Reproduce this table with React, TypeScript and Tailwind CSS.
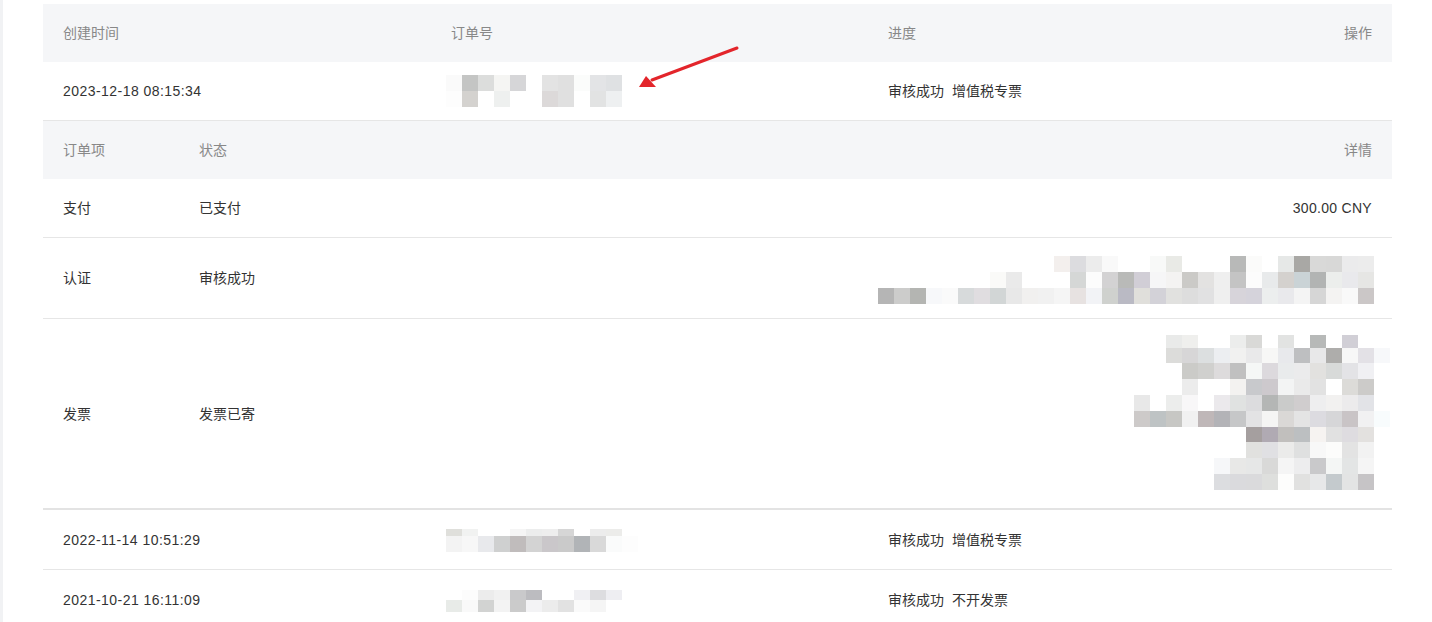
import React from 'react';

type MosaicRow = { h: number; c: string };

// pixelated (redacted) blocks, '-' = empty cell
function Mosaic({ rows, w = 16, className }: { rows: MosaicRow[]; w?: number; className?: string }) {
  const cols = Math.max(...rows.map((r) => r.c.split(' ').length));
  const height = rows.reduce((s, r) => s + r.h, 0);
  let y = 0;
  return (
    <svg width={cols * w} height={height} className={className} shapeRendering="crispEdges">
      {rows.map((r, ri) => {
        const top = y;
        y += r.h;
        return r.c.split(' ').map((col, ci) =>
          col === '-' ? null : (
            <rect key={ri + '-' + ci} x={ci * w} y={top} width={w} height={r.h} fill={'#' + col} />
          )
        );
      })}
    </svg>
  );
}

const orderMosaic1: MosaicRow[] = [
  { h: 16, c: 'fafafa c4c5c4 dcdddc f5f5f3 d6d6d8 - e3e3e3 e0e0e0 fbfcfb e3e4e6 dfe1e3' },
  { h: 16, c: 'fdfdfd d4d2cf - eef0ef - - dcd9d9 e0e0e0 - e2e3e3 eef0f1' },
];

const orderMosaic2: MosaicRow[] = [
  { h: 7, c: 'dfdfdb f1f2f1 - - f5f5f5 eceded eeeeee d6d6d6 - ececec ececea -' },
  { h: 16, c: 'f3f3f3 f7f7f7 e8e9ec cfd0d0 c0bcbc d3d3d3 cac7ca cacaca b1b4b7 d9d9d9 fafbfb fdfdfd' },
];

const orderMosaic3: MosaicRow[] = [
  { h: 10, c: '- fcfcfc ececec f1f1f1 c9c9cb bcbcc0 - - f0f0f3 dddde0 eeeef2' },
  { h: 12, c: 'e8ebe8 f9f9f9 d2d3d2 f3f3f3 cbcbcb f3f3f5 ececec e2e2e2 fafafa f5f5f5 -' },
];

const authMosaic: MosaicRow[] = [
  { h: 16, c: '- - - - - - - - - - - f3efed dcdcdf ececec f9f9f9 - - f8f9f8 e9eae6 - - - b8b9b8 fbfbfa - e6e8e7 a9a8a5 d9d9d8 d8d8d7 ebebec ececec' },
  { h: 16, c: '- - - - - - - fafaf8 eaeaea - - - d5d7d6 fcfcfc d3d2d3 b9bab8 d1ced6 f6f6f7 f4f3f2 cbcac7 e3e2e1 efefef c4c4c4 fcfcfc e8eaeb d4d1ce cad3d6 b2b4b3 eceeec e9e9ec e6e6e4' },
  { h: 16, c: 'b5b5b5 cccccb b4b5b2 f7f8fa fafafa d7dadb e0dde0 d2d6d6 e8e8e8 f1f0ef f1f1f1 f5f5f5 e7e2e1 f2f3f6 cfd1ce babac4 e0dfdb d3d2d8 e1e1df dddddd e1e1e2 efefef d7d4da d5d3db eceeee e9e9ec f4f4f4 d6d6d6 f4f3f2 f9f9f9 cbc7c7' },
];

const invoiceMosaic: MosaicRow[] = [
  { h: 13, c: '- - e9eae9 efefed - - ecedec d9d9d7 - e2e3e2 - b7b9b8 - d1cfd6 - -' },
  { h: 15, c: '- - dcdcda d7d6d7 dcdfe0 eceef1 f1f1f0 e9e9ea f7f7f6 e8e9ec bebfc1 e8e8e9 aeadab f7f7f7 e3e1e6 f7f8fa' },
  { h: 16, c: '- - - cbcbc8 d0d0ce dddbdc c0c0c0 f5f7f6 dcd9dd e9ebec ebebec e2e1df d8dad9 e3e3e6 f0f0f3 -' },
  { h: 16, c: '- - - ececec - - f3f2f0 c8c9cc cdc9cd f3f4f4 eaeaea e2e2e2 - dcdbd8 cccbc9 -' },
  { h: 16, c: 'e8e8e8 - ecedec f8f7f8 - ebe9ec e0e2e1 dcdcde b4b6b5 cacbca d0cdce eeeeef f2f1f0 ecebec e2e3e7 -' },
  { h: 16, c: 'cdcac9 bec3c4 c7c7c4 f1f1f1 bfb7b8 b3b3b7 c6c7c8 e3e3e4 f5f5f4 dad8d6 e4e4e4 dcdbe0 d6d6d8 c9c4c6 f1f1f2 f8fcfd' },
  { h: 15, c: '- - - - - - - a59f9f b0aab3 c1bfbd bcbfc1 f6f3f1 e1e1e1 dedce0 e3e1df -' },
  { h: 16, c: '- - - - - - - e1e1df e0e0e3 ebebea dfe0e0 f8f8f8 fcfcfb e3e3e3 f2f2f2 -' },
  { h: 16, c: '- - - - - f6f7f9 e8e8e7 e6e7e7 d9d9d8 f5f5f5 ededee c9c9cb f4f6f5 e3e5e5 f5f5f5 -' },
  { h: 16, c: '- - - - - dcdde0 dadadd dadadc dedfdd fdfdfc e1e1e0 e7e8e9 c4cacd e3e4e4 c6c4c6 -' },
];

const headCls = 'flex items-center px-5 text-[#888]';
const cellCls = 'flex items-center px-5 text-[#333]';
const dateCls = 'flex items-center px-5 text-[#333] tracking-[0.45px]';

function Progress({ a, b }: { a: string; b: string }) {
  return (
    <span className="flex gap-2">
      <span>{a}</span>
      <span>{b}</span>
    </span>
  );
}

export default function App() {
  return (
    <div
      className="flex min-h-[622px] w-[1432px] bg-white text-[14px] leading-none"
      style={{ fontFamily: '"Liberation Sans", "Noto Sans CJK SC", sans-serif' }}
    >
      <div className="w-[3px] shrink-0 bg-[#f1f2f4]" />
      <div className="relative ml-[40px] mt-[4px] w-[1349px]">
        {/* outer header */}
        <div className="grid h-[58px] grid-cols-[388px_437px_1fr_200px] bg-[#f5f6f8]">
          <div className={headCls}>创建时间</div>
          <div className={headCls}>订单号</div>
          <div className={headCls}>进度</div>
          <div className={headCls + ' justify-end'}>操作</div>
        </div>

        {/* order 1 */}
        <div className="grid h-[59px] grid-cols-[388px_437px_1fr_200px] border-b border-[#e6e6e6]">
          <div className={dateCls}>2023-12-18 08:15:34</div>
          <div className="flex items-center pl-[15px]">
            <Mosaic rows={orderMosaic1} />
          </div>
          <div className={cellCls}>
            <Progress a="审核成功" b="增值税专票" />
          </div>
          <div />
        </div>

        {/* order 1 items */}
        <div className="border-b-2 border-[#e3e3e3]">
          <div className="grid h-[58px] grid-cols-[136px_1fr_auto] bg-[#f5f6f8]">
            <div className={headCls}>订单项</div>
            <div className={headCls}>状态</div>
            <div className={headCls + ' justify-end'}>详情</div>
          </div>
          <div className="grid h-[59px] grid-cols-[136px_1fr_auto] border-b border-[#e6e6e6]">
            <div className={cellCls}>支付</div>
            <div className={cellCls}>已支付</div>
            <div className={cellCls + ' justify-end tracking-[0.3px]'}>300.00 CNY</div>
          </div>
          <div className="grid h-[81px] grid-cols-[136px_1fr_auto] border-b border-[#e6e6e6]">
            <div className={cellCls}>认证</div>
            <div className={cellCls}>审核成功</div>
            <div className="flex items-center pr-[18px] pt-[3px]">
              <Mosaic rows={authMosaic} />
            </div>
          </div>
          <div className="grid h-[189px] grid-cols-[136px_1fr_auto]">
            <div className={cellCls}>发票</div>
            <div className={cellCls}>发票已寄</div>
            <div className="flex items-start pr-[2px] pt-[16px]">
              <Mosaic rows={invoiceMosaic} />
            </div>
          </div>
        </div>

        {/* order 2 */}
        <div className="grid h-[60px] grid-cols-[388px_437px_1fr_200px] border-b border-[#e6e6e6]">
          <div className={dateCls}>2022-11-14 10:51:29</div>
          <div className="flex items-center pl-[15px] pt-[2px]">
            <Mosaic rows={orderMosaic2} />
          </div>
          <div className={cellCls}>
            <Progress a="审核成功" b="增值税专票" />
          </div>
          <div />
        </div>

        {/* order 3 */}
        <div className="grid h-[59px] grid-cols-[388px_437px_1fr_200px]">
          <div className={dateCls}>2021-10-21 16:11:09</div>
          <div className="flex items-center pl-[15px] pt-[2px]">
            <Mosaic rows={orderMosaic3} />
          </div>
          <div className={cellCls}>
            <Progress a="审核成功" b="不开发票" />
          </div>
          <div />
        </div>

        {/* annotation arrow */}
        <svg
          className="pointer-events-none absolute left-[593px] top-[40px]"
          width="110"
          height="52"
        >
          <line x1="101" y1="4" x2="16" y2="36" stroke="#e3252b" strokeWidth="3" strokeLinecap="round" />
          <polygon points="3,43 10,32 20,43" fill="#e3252b" />
        </svg>
      </div>
    </div>
  );
}
